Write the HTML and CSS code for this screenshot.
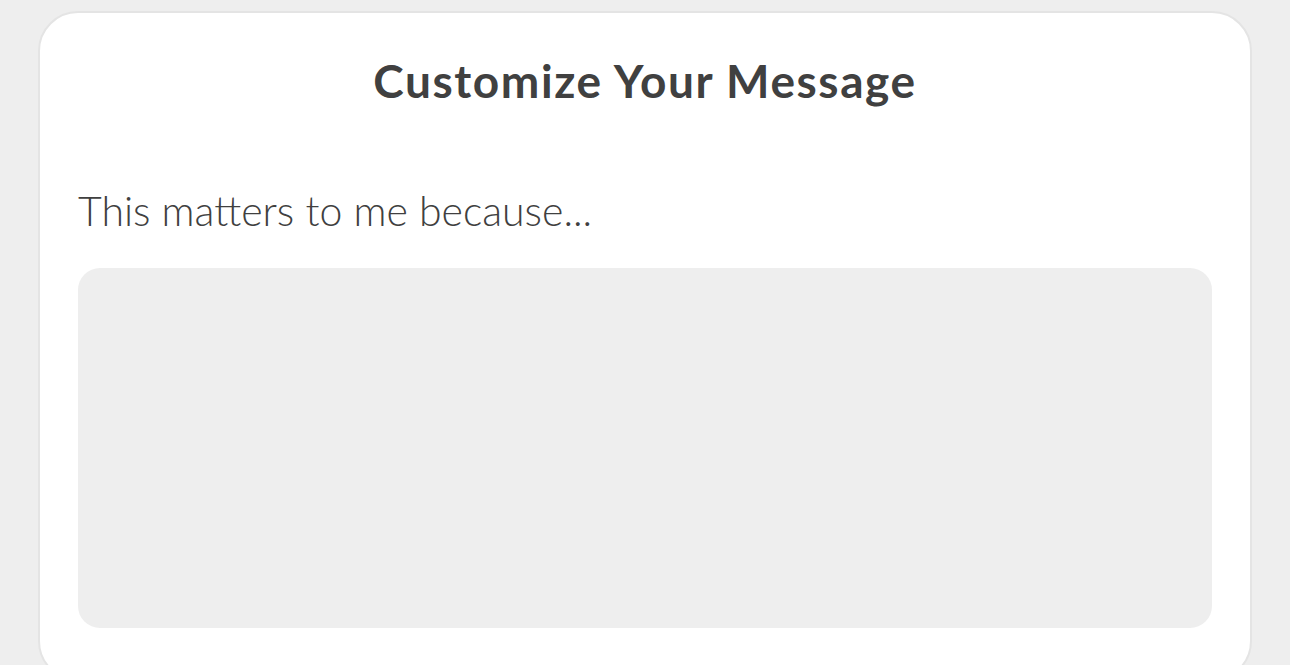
FILE: index.html
```html
<!DOCTYPE html>
<html lang="en">
<head>
<meta charset="utf-8">
<title>Customize Your Message</title>
<link rel="stylesheet" href="styles.css">
</head>
<body>
<main class="card">
  <h1 class="card-title">Customize Your Message</h1>
  <label class="field-label" for="msg">This matters to me because...</label>
  <textarea class="field-input" id="msg"></textarea>
</main>
</body>
</html>
```
FILE: styles.css
```css
html, body {
  margin: 0;
  padding: 0;
  background: #eeeeee;
  height: 100%;
  overflow: hidden;
}
body {
  font-family: "Lato", "Open Sans", sans-serif;
  color: #404040;
}
.card {
  box-sizing: border-box;
  margin: 11px 0 0 38px;
  width: 1214px;
  height: 670px;
  background: #ffffff;
  border: 2px solid #e4e4e4;
  border-radius: 40px;
  padding: 0 38px;
  display: flex;
  flex-direction: column;
}
.card-title {
  margin: 38px 0 0;
  font-size: 46px;
  font-weight: 700;
  line-height: 60px;
  letter-spacing: 1.6px;
  text-align: center;
  color: #404040;
}
.field-label {
  margin-top: 75px;
  font-size: 41px;
  font-weight: 300;
  line-height: 50px;
  color: #404040;
}
.field-input {
  box-sizing: border-box;
  margin-top: 32px;
  width: 100%;
  height: 360px;
  border: none;
  border-radius: 22px;
  background: #eeeeee;
  resize: none;
  outline: none;
  font-family: inherit;
}
```
